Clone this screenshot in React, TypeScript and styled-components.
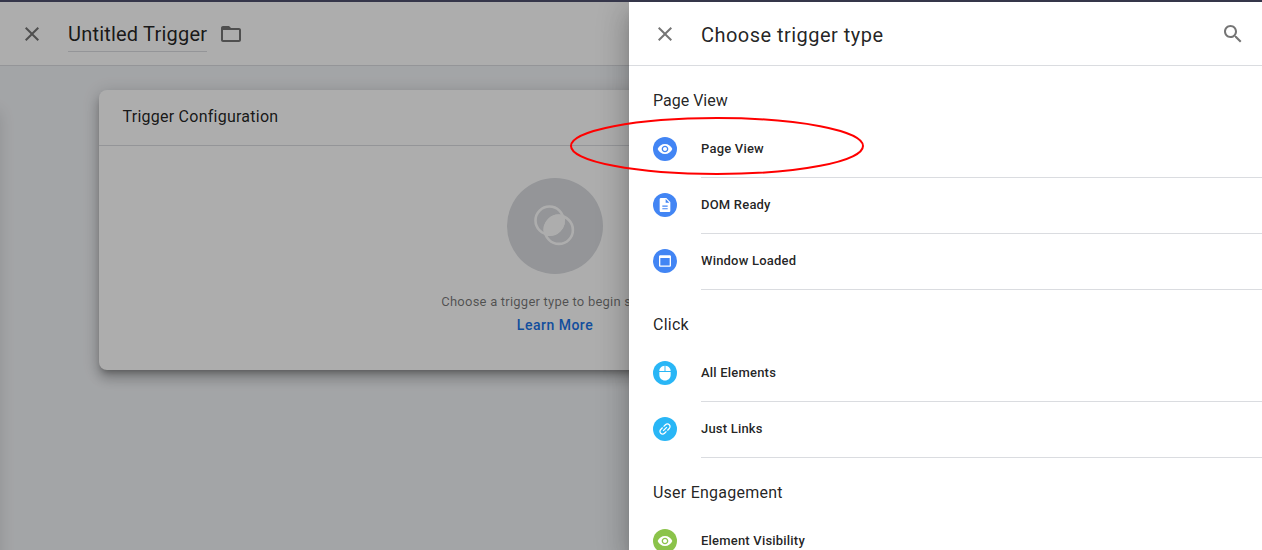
import React from "react";
import styled, { createGlobalStyle } from "styled-components";

const GlobalStyle = createGlobalStyle`
  * { box-sizing: border-box; }
  html, body { margin: 0; height: 100%; overflow: hidden; }
  body { font-family: Roboto, "Liberation Sans", sans-serif; color: rgba(0, 0, 0, 0.87); }
`;

const Screen = styled.div`
  position: relative;
  height: 550px;
  overflow: hidden;
  border-top: 2px solid #35364a;
  background: #f1f3f6;
`;

const EditorHeader = styled.header`
  display: flex;
  align-items: flex-start;
  height: 64px;
  padding: 20px 0 0 20px;
  background: #fff;
  border-bottom: 1px solid #dadce0;
`;

const Title = styled.div<{ $spacing: number }>`
  font-size: 20px;
  line-height: 24px;
  letter-spacing: ${(p) => p.$spacing}px;
  white-space: nowrap;
`;

const NameField = styled(Title)`
  width: 139px;
  height: 30px;
  margin: 0 12px 0 24px;
  border-bottom: 1px solid #dadce0;
`;

const Icon = styled.svg<{ $size?: number }>`
  display: block;
  flex: none;
  width: ${(p) => p.$size ?? 24}px;
  height: ${(p) => p.$size ?? 24}px;
  fill: #757575;
`;

const Workspace = styled.main`
  padding: 24px 251px 0 99px;
`;

const Card = styled.section`
  height: 280px;
  border-radius: 8px;
  background: #fff;
  box-shadow: 0 5px 6px -3px rgba(0, 0, 0, 0.3), 0 9px 12px 1px rgba(0, 0, 0, 0.14),
    0 3px 16px 2px rgba(0, 0, 0, 0.14);
`;

const CardHeader = styled.div`
  height: 56px;
  padding: 15px 23.5px 0;
  border-bottom: 1px solid #dadce0;
  font-size: 16px;
  line-height: 24px;
  letter-spacing: 0.25px;
`;

const CardBody = styled.div`
  display: flex;
  flex-direction: column;
  align-items: center;
  padding-top: 32px;
`;

const Emblem = styled.div`
  display: flex;
  align-items: center;
  justify-content: center;
  width: 96px;
  height: 96px;
  border-radius: 50%;
  background: #dadce0;
`;

const Hint = styled.div`
  margin-top: 16px;
  color: rgba(0, 0, 0, 0.54);
  font-size: 13px;
  line-height: 24px;
  letter-spacing: 0.22px;
  white-space: nowrap;
`;

const LearnMore = styled.a`
  margin-top: -1px;
  color: #1a73e8;
  font-size: 14px;
  font-weight: 500;
  line-height: 24px;
  letter-spacing: 0.5px;
`;

const Scrim = styled.div`
  position: absolute;
  inset: 0;
  background: rgba(0, 0, 0, 0.32);
`;

const Drawer = styled.aside`
  position: absolute;
  inset: 0 0 0 629px;
  background: #fff;
  box-shadow: 0 8px 10px -5px rgba(0, 0, 0, 0.2), 0 16px 24px 2px rgba(0, 0, 0, 0.14),
    0 6px 30px 5px rgba(0, 0, 0, 0.12);
`;

const DrawerHeader = styled.header`
  display: flex;
  align-items: flex-start;
  gap: 24px;
  height: 64px;
  padding: 20px 17px 0 24px;
  border-bottom: 1px solid #dadce0;
`;

const DrawerTitle = styled(Title)`
  flex: 1;
  padding-top: 1px;
`;

const Group = styled.section`
  padding: 16px 0 0 24px;
`;

const GroupTitle = styled.h3<{ $spacing: number }>`
  margin: 0;
  padding-top: 7px;
  height: 40px;
  font-size: 16px;
  font-weight: 400;
  line-height: 24px;
  letter-spacing: ${(p) => p.$spacing}px;
`;

const Option = styled.div`
  display: flex;
  gap: 24px;
  height: 56px;
`;

const OptionBadge = styled.span<{ $color: string }>`
  display: flex;
  flex: none;
  align-items: center;
  justify-content: center;
  width: 24px;
  height: 24px;
  margin-top: 15px;
  border-radius: 50%;
  background: ${(p) => p.$color};
  svg { fill: #fff; }
`;

const OptionLabel = styled.div`
  flex: 1;
  padding-top: 15px;
  border-bottom: 1px solid #dadce0;
  font-size: 13px;
  font-weight: 500;
  line-height: 24px;
  letter-spacing: 0.2px;
`;

const Highlight = styled.svg`
  position: absolute;
  left: 568px;
  top: 113px;
  width: 298px;
  height: 62px;
  fill: none;
  stroke: #f00;
  stroke-width: 2;
`;

const SideShadow = styled.div`
  position: absolute;
  left: -20px;
  top: 108px;
  width: 18px;
  height: 480px;
  box-shadow: 0 3px 16px 2px rgba(0, 0, 0, 0.12);
`;

const CloseIcon = () => (
  <Icon viewBox="0 0 24 24">
    <path d="M19 6.41L17.59 5 12 10.59 6.41 5 5 6.41 10.59 12 5 17.59 6.41 19 12 13.41 17.59 19 19 17.59 13.41 12z" />
  </Icon>
);

const paths = {
  eye: "M12 4.5C7 4.5 2.73 7.61 1 12c1.73 4.39 6 7.5 11 7.5s9.27-3.11 11-7.5c-1.73-4.39-6-7.5-11-7.5zM12 17c-2.76 0-5-2.24-5-5s2.24-5 5-5 5 2.24 5 5-2.24 5-5 5zm0-8c-1.66 0-3 1.34-3 3s1.34 3 3 3 3-1.34 3-3-1.34-3-3-3z",
  page: "M14 1.5H6c-1.1 0-2 .9-2 2v17c0 1.1.9 2 2 2h12c1.1 0 2-.9 2-2v-13l-6-6zm2 17H8v-1.8h8v1.8zm0-4H8v-1.8h8v1.8zm-3-6V3l5.5 5.5H13z",
  window: "M19 3.4H5c-1.1 0-2 .9-2 2v13.2c0 1.1.9 2 2 2h14c1.1 0 2-.9 2-2V5.4c0-1.1-.9-2-2-2zm0 15.2H5V7.4h14v11.2z",
  mouse: "M12.7 1V9h7.8c0-4.2-3.2-7.7-7.8-8zM3.5 15c0 4.6 3.7 8.3 8.5 8.3s8.5-3.7 8.5-8.3v-4.5h-17V15zM11.3 1C6.700 1.3 3.5 4.8 3.5 9h7.8V1z",
  link: "M3.9 12c0-1.71 1.39-3.1 3.1-3.1h4V7H7c-2.76 0-5 2.24-5 5s2.24 5 5 5h4v-1.9H7c-1.71 0-3.1-1.39-3.1-3.1zM8 13h8v-2H8v2zm9-6h-4v1.9h4c1.71 0 3.1 1.39 3.1 3.1s-1.39 3.1-3.1 3.1h-4V17h4c2.76 0 5-2.24 5-5s-2.24-5-5-5z",
};

type Kind = keyof typeof paths;

const groups: { title: string; spacing: number; color: string; items: [Kind, string][] }[] = [
  {
    title: "Page View",
    spacing: 0,
    color: "#4285f4",
    items: [["eye", "Page View"], ["page", "DOM Ready"], ["window", "Window Loaded"]],
  },
  {
    title: "Click",
    spacing: 0.25,
    color: "#29b6f6",
    items: [["mouse", "All Elements"], ["link", "Just Links"]],
  },
  { title: "User Engagement", spacing: 0.24, color: "#8bc34a", items: [["eye", "Element Visibility"]] },
];

export default function App() {
  return (
    <>
      <GlobalStyle />
      <Screen>
        <EditorHeader>
          <CloseIcon />
          <NameField $spacing={0.2}>Untitled Trigger</NameField>
          <Icon viewBox="0 0 24 24">
            <path d="M9.17 6l2 2H20v10H4V6h5.17M10 4H4c-1.1 0-1.99.9-1.99 2L2 18c0 1.1.9 2 2 2h16c1.1 0 2-.9 2-2V8c0-1.1-.9-2-2-2h-8l-2-2z" />
            <path d="M4 5h6l2 3H4z" />
          </Icon>
        </EditorHeader>
        <Workspace>
          <Card>
            <CardHeader>Trigger Configuration</CardHeader>
            <CardBody>
              <Emblem>
                <svg width="42" height="42" viewBox="0 0 42 42">
                  <g fill="none" stroke="#fff" strokeWidth="2.6">
                    <circle cx="15.5" cy="15.5" r="14" />
                    <circle cx="24.900" cy="24.900" r="14" />
                  </g>
                  <path
                    d="M29 11.400A14 14 0 0 1 11.400 29A14 14 0 0 1 29 11.400z"
                    fill="#fff"
                    stroke="#fff"
                    strokeWidth="2.6"
                  />
                </svg>
              </Emblem>
              <Hint>Choose a trigger type to begin setup...</Hint>
              <LearnMore>Learn More</LearnMore>
            </CardBody>
          </Card>
        </Workspace>
        <SideShadow />
        <Scrim />
        <Drawer>
          <DrawerHeader>
            <CloseIcon />
            <DrawerTitle $spacing={0.47}>Choose trigger type</DrawerTitle>
            <Icon viewBox="0 0 24 24">
              <path d="M15.5 14h-.79l-.28-.27C15.41 12.59 16 11.11 16 9.5 16 5.91 13.09 3 9.5 3S3 5.91 3 9.5 5.91 16 9.5 16c1.61 0 3.09-.59 4.23-1.57l.27.28v.79l5 4.99L20.49 19l-4.99-5zm-6 0C7.01 14 5 11.99 5 9.5S7.01 5 9.5 5 14 7.01 14 9.5 11.99 14 9.5 14z" />
            </Icon>
          </DrawerHeader>
          {groups.map((g) => (
            <Group key={g.title}>
              <GroupTitle $spacing={g.spacing}>{g.title}</GroupTitle>
              {g.items.map(([kind, label]) => (
                <Option key={label}>
                  <OptionBadge $color={g.color}>
                    <Icon viewBox="0 0 24 24" $size={16}>
                      <path d={paths[kind]} transform={kind === "link" ? "rotate(-45 12 12)" : undefined} />
                    </Icon>
                  </OptionBadge>
                  <OptionLabel>{label}</OptionLabel>
                </Option>
              ))}
            </Group>
          ))}
        </Drawer>
        <Highlight viewBox="0 0 298 62">
          <ellipse cx="149" cy="31" rx="146" ry="28" />
        </Highlight>
      </Screen>
    </>
  );
}
